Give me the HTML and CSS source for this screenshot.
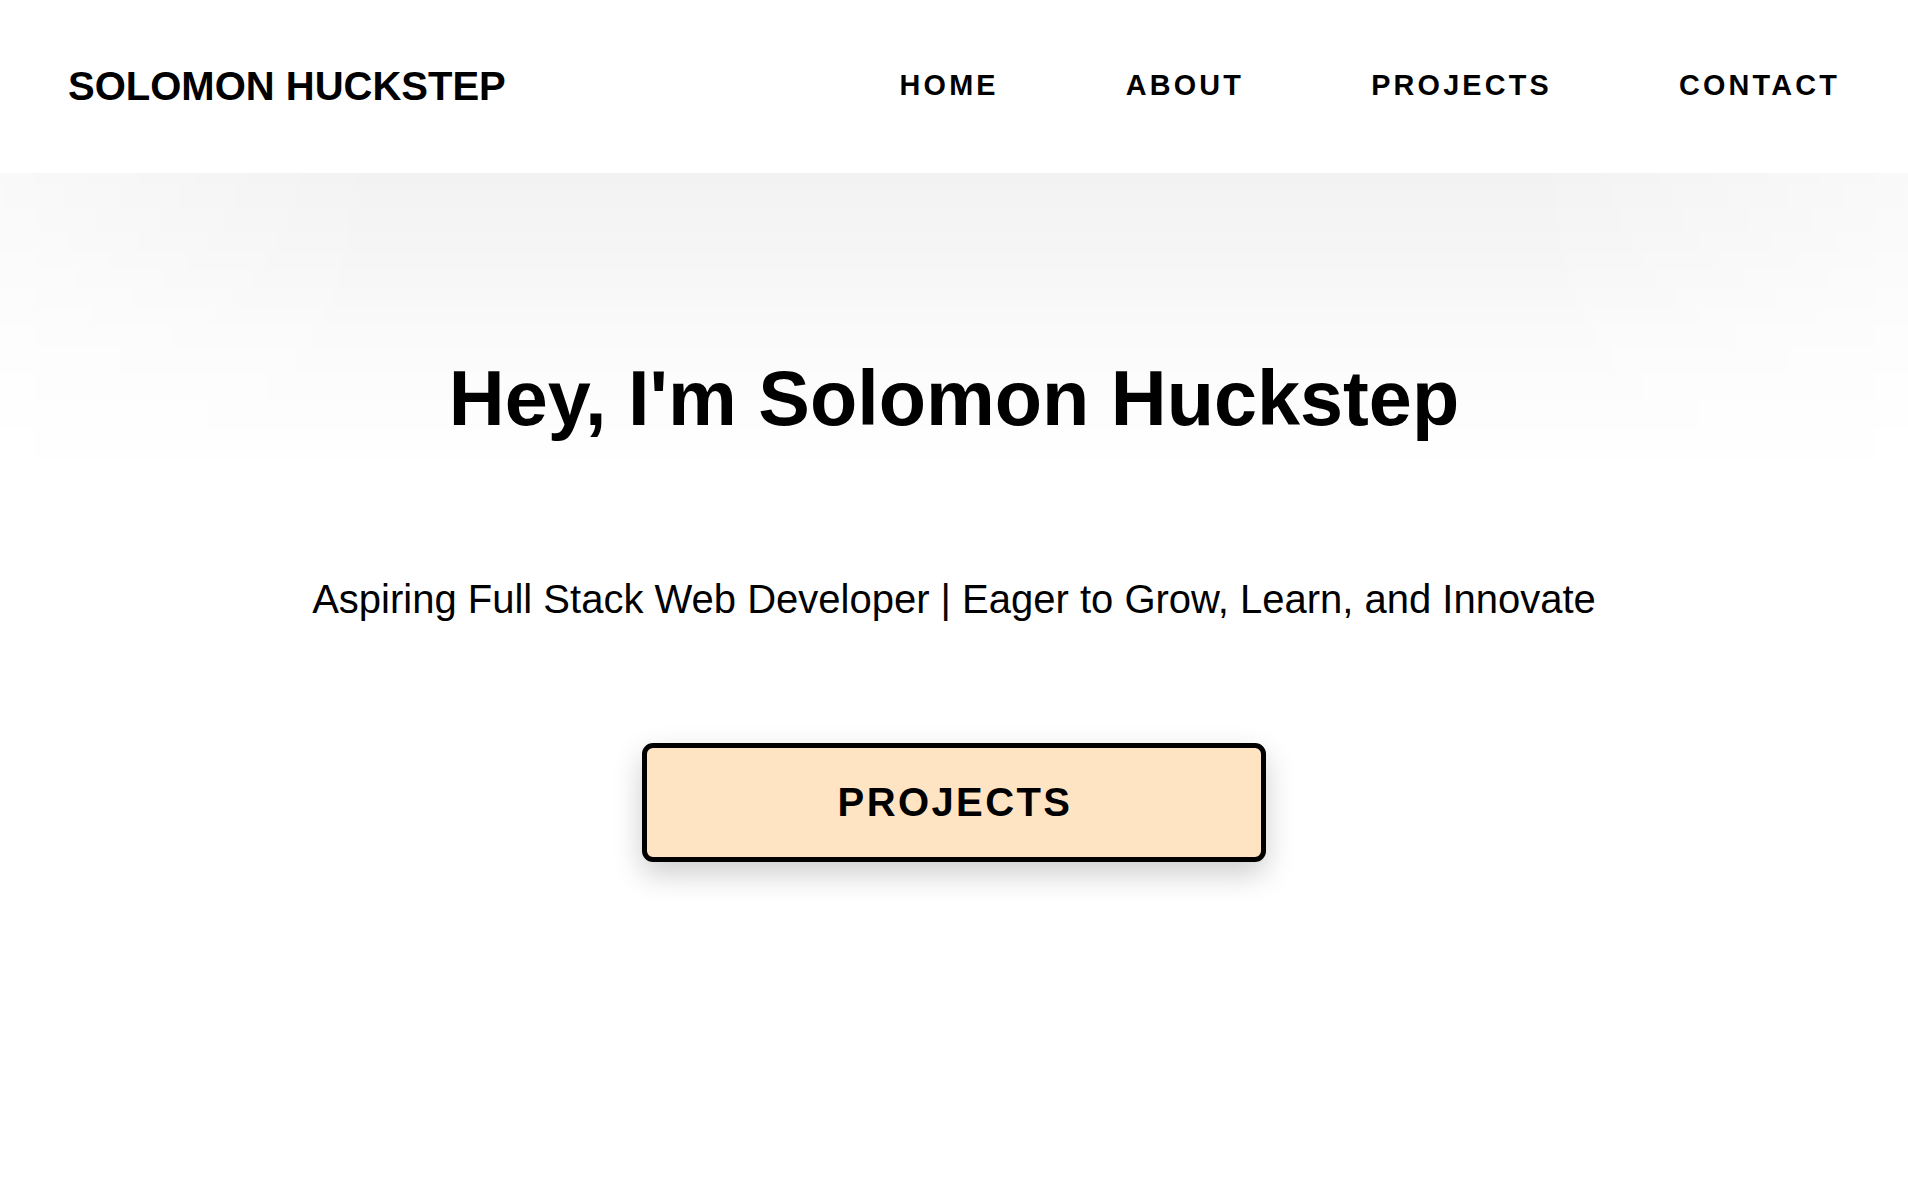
FILE: index.html
```html
<!DOCTYPE html>
<html lang="en">
<head>
<meta charset="utf-8">
<title>Solomon Huckstep</title>
<link rel="stylesheet" href="styles.css">
</head>
<body>
<header class="site-header">
  <a class="logo" href="#">SOLOMON HUCKSTEP</a>
  <nav class="nav">
    <a class="nav-link" href="#">HOME</a>
    <a class="nav-link" href="#">ABOUT</a>
    <a class="nav-link" href="#">PROJECTS</a>
    <a class="nav-link" href="#">CONTACT</a>
  </nav>
</header>
<main class="hero">
  <h1 class="hero-title">Hey, I'm Solomon Huckstep</h1>
  <p class="hero-subtitle">Aspiring Full Stack Web Developer | Eager to Grow, Learn, and Innovate</p>
  <a class="hero-button" href="#">PROJECTS</a>
</main>
</body>
</html>
```

FILE: styles.css
```css
* { box-sizing: border-box; }

html, body {
  margin: 0;
  padding: 0;
  background: #ffffff;
  color: #000000;
  font-family: "Liberation Sans", Arial, sans-serif;
}

body {
  min-height: 1201px;
  overflow: hidden;
}

.site-header {
  position: relative;
  z-index: 2;
  height: 173px;
  display: flex;
  align-items: center;
  justify-content: space-between;
  padding: 0 68px 2px 68px;
  background: #ffffff;
}

.logo {
  font-size: 40px;
  font-weight: 700;
  color: #000;
  text-decoration: none;
  line-height: 1;
}

.nav {
  display: flex;
  align-items: center;
  gap: 127px;
}

.nav-link {
  font-size: 28.8px;
  font-weight: 700;
  letter-spacing: 3.2px;
  color: #000;
  text-decoration: none;
  line-height: 1;
}

.hero {
  position: relative;
  z-index: 1;
  display: flex;
  flex-direction: column;
  align-items: center;
  padding-top: 181px;
}

.hero::before {
  content: "";
  position: absolute;
  top: 0;
  left: 0;
  right: 0;
  height: 300px;
  z-index: -1;
  background: linear-gradient(to bottom,
    rgba(0, 0, 0, 0.052) 0px,
    rgba(0, 0, 0, 0.038) 70px,
    rgba(0, 0, 0, 0.02) 160px,
    rgba(0, 0, 0, 0.007) 240px,
    rgba(0, 0, 0, 0) 300px);
  -webkit-mask-image: linear-gradient(to right, rgba(0,0,0,0.45), #000 20%, #000 80%, rgba(0,0,0,0.45));
  mask-image: linear-gradient(to right, rgba(0,0,0,0.45), #000 20%, #000 80%, rgba(0,0,0,0.45));
}

.hero-title {
  margin: 0;
  font-size: 77.4px;
  font-weight: 700;
  line-height: 88px;
  text-align: center;
}

.hero-subtitle {
  margin: 134px 0 0 0;
  font-size: 40px;
  font-weight: 400;
  line-height: 46px;
  text-align: center;
}

.hero-button {
  margin-top: 121px;
  width: 624px;
  height: 119px;
  display: flex;
  align-items: center;
  justify-content: center;
  background: #ffe4c4;
  border: 5px solid #000;
  border-radius: 11px;
  box-shadow: 0 12px 30px rgba(0, 0, 0, 0.2);
  color: #000;
  text-decoration: none;
  font-size: 40px;
  font-weight: 700;
  letter-spacing: 2.4px;
  padding-left: 2px;
}
```
